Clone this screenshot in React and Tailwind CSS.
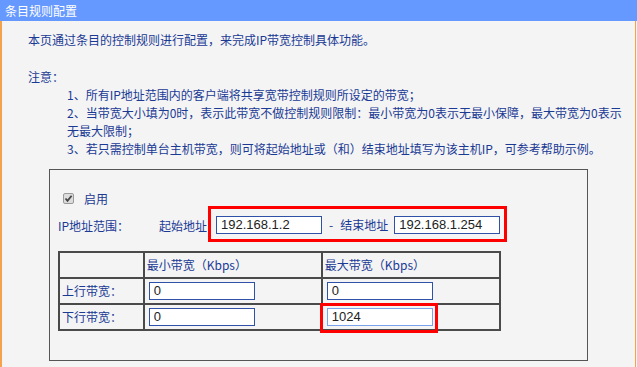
import React from 'react';

const font = { fontFamily: '"Noto Sans CJK SC", "Liberation Sans", sans-serif' };

function TextBox({ value, focused }) {
  return (
    <div
      className={`w-[106px] h-[18px] bg-white border flex items-center pl-[4px] text-[13px] text-[#222] ${
        focused ? 'border-[#7ba3ea]' : 'border-[#2f52a8]'
      }`}
      style={{ fontFamily: '"Liberation Sans", Arial, sans-serif' }}
    >
      {value}
    </div>
  );
}

export default function App() {
  return (
    <div className="w-[637px] h-[367px] overflow-hidden bg-[#f4f4f4] text-[12px] text-[#1a3a94] whitespace-nowrap" style={font}>
      {/* title bar */}
      <div className="h-[21px] bg-[#6699ff] text-white text-[12px] leading-[21px] pl-[5px]">条目规则配置</div>

      <div className="w-[636px] h-[346px] border-l-2 border-r border-[#f5a24f] pt-[10px]">
        <p className="pl-[26px] leading-[18px]">本页通过条目的控制规则进行配置，来完成IP带宽控制具体功能。</p>

        <p className="pl-[26px] mt-[19px] leading-[18px]">注意：</p>
        <div className="pl-[65px] leading-[18px]">
          <p>1、所有IP地址范围内的客户端将共享宽带控制规则所设定的带宽；</p>
          <p>
            2、当带宽大小填为0时，表示此带宽不做控制规则限制：最小带宽为0表示无最小保障，最大带宽为0表示
            <br />
            无最大限制；
          </p>
          <p>3、若只需控制单台主机带宽，则可将起始地址或（和）结束地址填写为该主机IP，可参考帮助示例。</p>
        </div>

        {/* settings box */}
        <div className="ml-[47px] mt-[11px] w-[539px] h-[192px] border border-[#555]">
          <div className="flex items-center h-[15px] mt-[21px] pl-[13px] gap-[10px]">
            <div className="w-[11px] h-[11px] border border-[#9a9a9a] bg-[#dcdcdc] rounded-[2px] flex items-center justify-center">
              <svg width="9" height="9" viewBox="0 0 9 9">
                <path d="M1.5 4.5 L3.5 6.8 L7.6 1.8" fill="none" stroke="#444" strokeWidth="1.8" />
              </svg>
            </div>
            <span>启用</span>
          </div>

          <div className="flex items-center h-[36px] pl-[8px]">
            <span className="w-[101px] shrink-0 pt-[3px]">IP地址范围：</span>
            <span className="w-[49px] shrink-0 pt-[3px]">起始地址</span>
            <div className="flex items-center shrink-0 h-[36px] border-[3px] border-[#ff0000] pl-[5px] pr-[4px] pt-[1px]">
              <TextBox value="192.168.1.2" />
              <span className="ml-[7px] mr-[7px]">-</span>
              <span className="w-[54px] shrink-0">结束地址</span>
              <TextBox value="192.168.1.254" />
            </div>
          </div>

          <table className="ml-[8px] mt-[9px] w-[443px] border-collapse border-2 border-[#4a4a4a]">
            <tbody>
              <tr className="h-[26px]">
                <td className="w-[85px] border-2 border-[#4a4a4a]"></td>
                <td className="w-[179px] border-2 border-[#4a4a4a] pl-[2px]">最小带宽（Kbps）</td>
                <td className="w-[179px] border-2 border-[#4a4a4a] pl-[2px]">最大带宽（Kbps）</td>
              </tr>
              <tr className="h-[26px]">
                <td className="border-2 border-[#4a4a4a] pl-[2px]">上行带宽：</td>
                <td className="border-2 border-[#4a4a4a] pl-[4px]">
                  <TextBox value="0" />
                </td>
                <td className="border-2 border-[#4a4a4a] pl-[4px]">
                  <TextBox value="0" />
                </td>
              </tr>
              <tr className="h-[26px]">
                <td className="border-2 border-[#4a4a4a] pl-[2px]">下行带宽：</td>
                <td className="border-2 border-[#4a4a4a] pl-[4px]">
                  <TextBox value="0" />
                </td>
                <td className="border-2 border-[#4a4a4a] pl-[4px]">
                  <div className="relative w-[106px]">
                    <TextBox value="1024" focused />
                    <div className="absolute left-[-7px] top-[-5px] w-[118px] h-[30px] border-[3px] border-[#ff0000]"></div>
                  </div>
                </td>
              </tr>
            </tbody>
          </table>
        </div>
      </div>
    </div>
  );
}
